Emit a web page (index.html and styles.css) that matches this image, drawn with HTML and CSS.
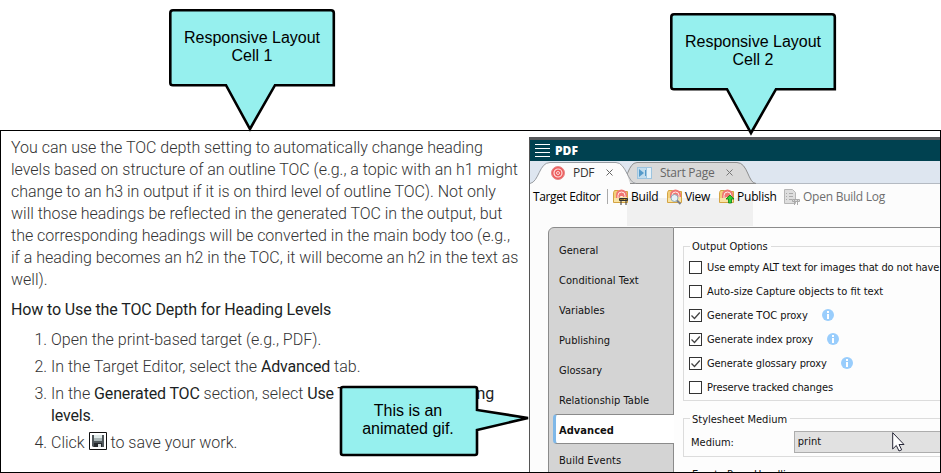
FILE: index.html
```html
<!DOCTYPE html>
<html lang="en">
<head>
<meta charset="utf-8">
<title>Responsive Layout</title>
<link rel="stylesheet" href="styles.css">
</head>
<body>
<div class="page">
  <main class="frame">
    <section class="article">
      <p>You can use the TOC depth setting to automatically change heading<br>levels based on structure of an outline TOC (e.g., a topic with an h1 might<br>change to an h3 in output if it is on third level of outline TOC). Not only<br>will those headings be reflected in the generated TOC in the output, but<br>the corresponding headings will be converted in the main body too (e.g.,<br>if a heading becomes an h2 in the TOC, it will become an h2 in the text as<br>well).</p>
      <h2>How to Use the TOC Depth for Heading Levels</h2>
      <ol>
        <li>Open the print-based target (e.g., PDF).</li>
        <li>In the Target Editor, select the <b>Advanced</b> tab.</li>
        <li>In the <b>Generated TOC</b> section, select <b>Use TOC depth for heading<br>levels</b>.</li>
        <li>Click <svg class="save" width="18" height="18" viewBox="0 0 18 18"><path fill="#fff" stroke="#111" d="M.5.5h17v17H.5z"/><path fill="#50575b" d="M3 3h12v12H4l-1-1z"/><path fill="#dfe9e8" d="M5 3h8v6H5z"/><path fill="#a9b5b6" d="M5 6h8v3H5z"/><path fill="#262a2d" d="M5 11h8v4H5z"/><path fill="#d9dedf" d="M9 12h3v3H9z"/></svg> to save your work.</li>
      </ol>
    </section>
    <section class="app">
      <header class="titlebar">
        <svg width="15" height="14" viewBox="0 0 15 14"><path stroke="#fff" d="M0 .5h15M0 4.5h15M0 8.5h15M0 12.5h15"/></svg>
        <strong>PDF</strong>
      </header>
      <div class="tabs">
        <svg class="tabshape" width="410" height="24" viewBox="0 0 410 24"><path stroke="#b4bac2" d="M0 22.5h410"/><path fill="#d9d9d9" stroke="#8d8d8d" d="M91 22.5C97 21 98 1.500 107 1.500H207C218 1.500 218 22.500 226 22.500Z"/><path fill="#fcfcfc" d="M0 24V22C9 22 9 1.500 20 1.500H86C96 1.500 98 18 100 22V24Z"/><path fill="none" stroke="#989ca1" d="M0 22.500C9 21 9 1.500 20 1.500H86C96 1.500 98 22.500 106 22.500"/></svg>
        <div class="tab tab1"><svg width="14" height="14" viewBox="0 0 14 14"><circle cx="7" cy="7" r="6.500" fill="#ed5c5c" stroke="#e58b8b"/><circle cx="7" cy="7" r="4" fill="none" stroke="#ffe0df" stroke-width="1.200"/><circle cx="7" cy="7" r="1.500" fill="#e95555" stroke="#ffd8d8"/></svg><span>PDF</span><svg class="x" width="7" height="7" viewBox="0 0 7 7"><path stroke="#666" d="M.5.5l6 6m0-6l-6 6"/></svg></div>
        <div class="tab tab2"><svg width="15" height="12" viewBox="0 0 15 12"><path fill="#9dc4df" d="M0 0h15v12H0z"/><path fill="#c2dced" d="M1 1h8v10H1z"/><path fill="#559ac9" d="M2 2l5 4-5 4zM8 3h1v6H8z"/><path fill="#e7f2f8" d="M10 1h4v10h-4z"/></svg><span>Start Page</span><svg class="x" width="7" height="7" viewBox="0 0 7 7"><path stroke="#777" d="M.5.5l6 6m0-6l-6 6"/></svg></div>
      </div>
      <div class="toolbar">
        <div class="ghost"></div>
        <span class="te">Target Editor</span><i class="sep"></i>
        <svg class="ic i1" width="16" height="16" viewBox="0 0 16 16"><path fill="#f3cf7c" stroke="#d4a443" d="M.5 3.500l1-2h4v1h9v11H.5z"/><path fill="#f17673" d="M3 10V6a5.500 5.500 0 0 1 11 0v4z"/><path fill="none" stroke="#fff0e8" d="M5 9V6.500a3.500 3.500 0 0 1 7 0V9M7.500 9V7.500h2V9"/><path fill="#f9e3a4" d="M1 9h5l1-1h7v5H1z"/><path fill="#e9ad27" stroke="#333" d="M6.500 9.500h8v2h-8z"/><path stroke="#333" d="M8 9v7m5-7v7M9 12l2-3"/></svg>
        <span class="build">Build</span>
        <svg class="ic i2" width="16" height="16" viewBox="0 0 16 16"><path fill="#f3cf7c" stroke="#d4a443" d="M.5 3.500l1-2h4v1h9v11H.5z"/><path fill="#f17673" d="M3 10V6a5.500 5.500 0 0 1 11 0v4z"/><path fill="none" stroke="#fff0e8" d="M5 9V6.500a3.500 3.500 0 0 1 7 0V9"/><path fill="#f9e3a4" d="M1 9h5l1-1h7v5H1z"/><circle cx="7.500" cy="9" r="3.500" fill="#e6f1f6" stroke="#8eaab8"/><path stroke="#777c89" stroke-width="2" d="M10 11.500L13.500 15"/></svg>
        <span class="view">View</span>
        <svg class="ic i3" width="16" height="16" viewBox="0 0 16 16"><path fill="#f3cf7c" stroke="#d4a443" d="M.5 3.500l1-2h4v1h9v11H.5z"/><path fill="#f17673" d="M3 10V6a5.500 5.500 0 0 1 11 0v4z"/><path fill="none" stroke="#fff0e8" d="M5 9V6.500a3.500 3.500 0 0 1 7 0V9"/><path fill="#f9e3a4" d="M1 9h5l1-1h7v5H1z"/><path fill="#31cf32" stroke="#087c17" stroke-width=".8" d="M11 6l4 4h-2.500v4h-3v-4H7z"/></svg>
        <span class="pub">Publish</span>
        <svg class="ic i4" width="16" height="16" viewBox="0 0 16 16"><path fill="#dedede" stroke="#b6b6b6" d="M.5.500h8l3 3v11H.5z"/><path stroke="#aaa" d="M2 4.500h1m2 0h4M2 7.500h1m2 0h4M2 10.500h1m2 0h3"/><path stroke="#aaa" fill="#ddd" d="M8.500 10.500h7v2h-7zM10.500 10v6m3-6v6"/></svg>
        <span class="log">Open Build Log</span>
      </div>
      <div class="body">
        <nav>
          <a>General</a><a>Conditional Text</a><a>Variables</a><a>Publishing</a><a>Glossary</a><a>Relationship Table</a><a class="on">Advanced</a><a>Build Events</a>
        </nav>
        <div class="form">
          <div class="group g1">
            <div class="legend">Output Options</div>
            <label><i class="cb"></i><span class="r1">Use empty ALT text for images that do not have</span></label>
            <label><i class="cb"></i><span>Auto-size Capture objects to fit text</span></label>
            <label><i class="cb on"><svg width="11" height="11"><path fill="none" stroke="#444" stroke-width="1.300" d="M1.500 5.500L4.500 8.500L9.800 2.500"/></svg></i><span class="w1">Generate TOC proxy</span><svg class="info" width="12" height="12"><circle cx="6" cy="6" r="6" fill="#99cdfc"/><path fill="#fff" d="M5 2h2v2H5zM5 5h2v5H5z"/></svg></label>
            <label><i class="cb on"><svg width="11" height="11"><path fill="none" stroke="#444" stroke-width="1.300" d="M1.500 5.500L4.500 8.500L9.800 2.500"/></svg></i><span class="w2">Generate index proxy</span><svg class="info" width="12" height="12"><circle cx="6" cy="6" r="6" fill="#99cdfc"/><path fill="#fff" d="M5 2h2v2H5zM5 5h2v5H5z"/></svg></label>
            <label><i class="cb on"><svg width="11" height="11"><path fill="none" stroke="#444" stroke-width="1.300" d="M1.500 5.500L4.500 8.500L9.800 2.500"/></svg></i><span class="w3">Generate glossary proxy</span><svg class="info" width="12" height="12"><circle cx="6" cy="6" r="6" fill="#99cdfc"/><path fill="#fff" d="M5 2h2v2H5zM5 5h2v5H5z"/></svg></label>
            <label><i class="cb"></i><span class="r2">Preserve tracked changes</span></label>
          </div>
          <div class="group g2">
            <div class="legend">Stylesheet Medium</div>
            <div class="row"><span class="med">Medium:</span><div class="select">print</div></div>
          </div>
          <div class="group g3"><div class="legend">Empty Page Handling</div></div>
        </div>
      </div>
    </section>
  </main>
  <div class="callout c1"><svg width="170" height="134"><path d="M4 2.200H162Q164.800 2.200 164.800 5V77.200H106L81 121L57 77.200H4Q1.300 77.200 1.300 75V5Q1.300 2.200 4 2.200Z"/></svg><p>Responsive Layout<br>Cell 1</p></div>
  <div class="callout c2"><svg width="170" height="134"><path d="M4 2.200H162Q164.800 2.200 164.800 5V77.200H106L81 121L57 77.200H4Q1.300 77.200 1.300 75V5Q1.300 2.200 4 2.200Z"/></svg><p>Responsive Layout<br>Cell 2</p></div>
  <div class="callout c3"><svg width="200" height="74"><path d="M4 2H136Q138 2 138 4V25L189 33L138 45V68Q138 70 136 70H4Q2 70 2 68V4Q2 2 4 2Z"/></svg><p>This is an<br>animated gif.</p></div>
  <svg class="cursor" width="13" height="20" viewBox="0 0 13 20"><path fill="#fff" stroke="#252536" d="M.7.7V17L4.300 13.500L7 19L9.700 17.800L7 12.500H12Z"/></svg>
</div>
</body>
</html>
```
FILE: styles.css
```css
* { box-sizing: border-box; }
body { margin: 0; background: #fff; }
svg { display: block; flex: none; }
.page { position: relative; width: 941px; height: 473px; padding-top: 130px; overflow: hidden; }
.frame { display: flex; height: 343px; border: 1px solid #000; overflow: hidden; }

.article { width: 528px; flex: none; padding: 6px 0 0 10px; font: 300 16px/22px Roboto, sans-serif; color: #333; white-space: nowrap; }
.article p { margin: 0; letter-spacing: -.015px; }
.article h2 { margin: 8px 0 0; font-size: 16px; font-weight: 400; line-height: 22px; letter-spacing: -.12px; color: #1c1f24; }
.article ol { margin: 8px 0 0; padding-left: 40px; }
.article li { margin-bottom: 5px; }
.article b { font-weight: 400; letter-spacing: -.16px; color: #1c1f24; }
.save { display: inline-block; vertical-align: -2px; }

.app { width: 411px; flex: none; margin-top: 6px; border-left: 1px solid #555; border-top: 3px solid #57585b; background: #fcfcfc; font-family: "DejaVu Sans Condensed", sans-serif; color: #111; white-space: nowrap; }
.titlebar { display: flex; align-items: center; gap: 5px; height: 21px; padding-left: 5px; background: #004150; color: #fff; font: 700 12px/20px "Open Sans", sans-serif; }
.tabs { position: relative; display: flex; height: 23px; background: #dee6f0; font: 12px/25px "Open Sans", sans-serif; color: #333; }
.tabshape { position: absolute; left: 0; top: 0; }
.tab { position: relative; display: flex; align-items: center; }
.tab1 { padding-left: 21px; width: 107px; }
.tab1 span { width: 33px; margin-left: 8px; letter-spacing: -.3px; }
.tab2 span { width: 66px; margin-left: 8px; letter-spacing: -.25px; color: #666; }
.toolbar { position: relative; display: flex; align-items: center; height: 43px; padding: 0 0 18px 3px; font: 12px/16px "Open Sans", sans-serif; color: #000; }
.toolbar > * { position: relative; flex: none; }
.toolbar .ghost { position: absolute; left: 97px; top: 14px; width: 126px; height: 28px; background: #f0f0f0; }
.te { width: 74px; letter-spacing: -.38px; }
.sep { width: 1px; height: 15px; background: #aaa; margin-right: 5px; }
.build { width: 36px; margin-left: 2px; letter-spacing: -.2px; }
.view { width: 34px; margin-left: 2px; letter-spacing: -.3px; }
.pub { width: 47px; margin-left: 2px; letter-spacing: -.2px; }
.log { margin-left: 3px; letter-spacing: -.25px; color: #6e6e6e; }

.body { display: flex; height: 260px; padding-left: 18px; font-size: 11px; }
nav { width: 126px; flex: none; padding-top: 6px; border: 1px solid #8b8b8b; border-radius: 6px 0 0; background: #d4d4d4; }
nav a { display: block; height: 30px; padding-left: 10px; line-height: 34px; letter-spacing: .05px; }
nav a.on { width: 121px; margin-left: 4px; padding-left: 3px; border: 1px solid #8b8b8b; border-left: 3px solid #7fb8e8; border-right: 0; border-radius: 4px 0 0 4px; background: #fff; font-weight: 700; line-height: 32px; }
.form { flex: 1; padding: 18px 0 0 9px; border-top: 1px solid #8b8b8b; background: #fdfdfd; }
.group { width: 270px; border: 1px solid #dcdcdc; padding-left: 5px; }
.g1 { height: 155px; }
.g2 { height: 39px; margin-top: 17px; }
.g3 { height: 39px; margin-top: 17px; }
.legend { width: max-content; height: 14px; margin: -7px 0 0 1px; padding: 0 3px 0 2px; background: #fdfdfd; line-height: 14px; }
.g2 .legend { line-height: 16px; }
.g1 .legend { margin-bottom: 1px; }
label { display: flex; align-items: center; height: 24px; }
.cb { width: 13px; height: 13px; flex: none; margin-right: 5px; border: 1px solid #333; background: #fff; }
.r1 { letter-spacing: -.11px; }
.r2 { letter-spacing: -.08px; }
.w1 { width: 115px; }
.w2 { width: 120px; letter-spacing: -.05px; }
.w3 { width: 134px; letter-spacing: -.07px; }
.row { display: flex; align-items: center; margin-top: 5px; }
.med { width: 105px; padding-left: 1px; line-height: 15px; }
.g2 .row { padding-left: 1px; }
.select { width: 160px; height: 22px; padding-left: 3px; border: 1px solid #adadad; background: #e1e1e1; line-height: 20px; }

.callout { position: absolute; font: 16px/18px "Liberation Sans", sans-serif; color: #000; text-align: center; }
.callout path { fill: #96f0ee; stroke: #000; stroke-width: 2.600; }
.callout p { position: absolute; margin: 0; white-space: nowrap; }
.c1 { left: 169px; top: 8px; }
.c2 { left: 670px; top: 12px; }
.c1 p, .c2 p { left: 0; top: 21px; width: 166px; }
.c3 { left: 339px; top: 385px; }
.c3 p { left: 0; top: 17px; width: 138px; }
.cursor { position: absolute; left: 892px; top: 432px; }
```
